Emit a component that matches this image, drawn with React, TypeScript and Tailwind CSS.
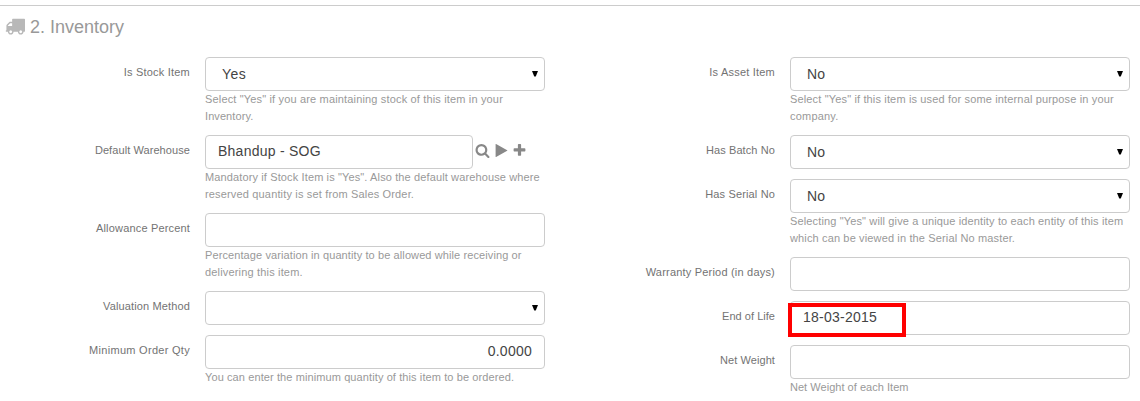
import type { ReactNode } from "react";

const TRUCK =
  "M640 1408q0-52-38-90t-90-38-90 38-38 90 38 90 90 38 90-38 38-90zm-384-512h384v-256h-158q-13 0-22 9l-195 195q-9 9-9 22v30zm1280 512q0-52-38-90t-90-38-90 38-38 90 38 90 90 38 90-38 38-90zm256-1088v1024q0 15-4 26.500t-13.500 18.500-16.500 11.500-23.500 6-22.500 2-25.500 0-22.500-.5q0 106-75 181t-181 75-181-75-75-181h-384q0 106-75 181t-181 75-181-75-75-181h-64q-3 0-22.500.5t-25.500 0-22.500-2-23.500-6-16.500-11.500-13.500-18.500-4-26.500q0-26 19-45t45-19v-320q0-8-.5-35t0-38 2.500-34.500 6.500-37 14-30.500 22.500-30l198-198q19-19 50.500-32t58.500-13h160v-192q0-26 19-45t45-19h1024q26 0 45 19t19 45z";
const SEARCH =
  "M1216 832q0-185-131.500-316.500t-316.500-131.500-316.500 131.500-131.500 316.500 131.500 316.500 316.500 131.500 316.500-131.500 131.500-316.500zm512 832q0 52-38 90t-90 38q-54 0-90-38l-343-342q-179 124-399 124-143 0-273.500-55.500t-225-150-150-225-55.500-273.500 55.500-273.500 150-225 225-150 273.500-55.500 273.500 55.500 225 150 150 225 55.500 273.500q0 220-124 399l343 343q37 37 37 90z";
const PLAY =
  "M1576 927l-1328 738q-23 13-39.500 3t-16.500-36v-1472q0-26 16.500-36t39.500 3l1328 738q23 13 23 31t-23 31z";
const PLUS =
  "M1600 736v192q0 40-28 68t-68 28h-416v416q0 40-28 68t-68 28h-192q-40 0-68-28t-28-68v-416h-416q-40 0-68-28t-28-68v-192q0-40 28-68t68-28h416v-416q0-40 28-68t68-28h192q40 0 68 28t28 68v416h416q40 0 68 28t28 68z";

type Line = [text: string, tracking: string];

function Glyph({ d, className }: { d: string; className: string }) {
  return (
    <svg viewBox="0 0 1792 1792" className={className} fill="currentColor" aria-hidden="true">
      <path d={d} />
    </svg>
  );
}

function Field({ label, help, children }: { label: Line; help?: Line[]; children: ReactNode }) {
  return (
    <div className="mb-2.5 flex">
      <div className={`w-[190px] shrink-0 pt-[7px] text-right text-[11px] leading-[17px] text-[#737373] ${label[1]}`}>
        {label[0]}
      </div>
      <div className="ml-[15px] w-[340px]">
        {children}
        {help?.map(([text, tracking]) => (
          <p key={text} className={`whitespace-nowrap text-[11px] leading-[17px] text-[#999] ${tracking}`}>
            {text}
          </p>
        ))}
      </div>
    </div>
  );
}

function Select({ value = "", tracking = "" }: { value?: string; tracking?: string }) {
  return (
    <div className="flex h-[34px] items-start justify-between rounded-[4px] border border-[#ccc] pl-4 pr-1.5 pt-1.5 text-[14px] leading-5 text-[#444]">
      <span className={tracking}>{value}</span>
      <svg viewBox="0 0 12 11" className="mt-[7px] h-[5.5px] w-1.5" fill="#000" aria-hidden="true">
        <path d="M0 0h12L7.500 11h-3z" />
      </svg>
    </div>
  );
}

function Input({ value = "", className = "w-full" }: { value?: string; className?: string }) {
  return (
    <div
      className={`h-[34px] rounded-[4px] border border-[#ccc] px-3 pt-[5px] text-[14px] leading-5 tracking-[0.25px] text-[#444] ${className}`}
    >
      {value}
    </div>
  );
}

export default function App() {
  return (
    <main className="h-[401px] overflow-hidden bg-white pt-[5px] font-['Liberation_Sans',Arial,sans-serif]">
      <section className="border-t border-[#ccc]">
        <h2 className="flex h-[51px] items-start pl-[5px] pt-[10px] text-[18px] leading-5 text-[#999]">
          <Glyph d={TRUCK} className="h-5 w-5 text-[#b8b8b8]" />
          <span className="ml-[5px] mt-px">2. Inventory</span>
        </h2>
        <div className="flex gap-10">
          <div className="w-[545px]">
            <Field
              label={["Is Stock Item", "tracking-[0.21px]"]}
              help={[
                ['Select "Yes" if you are maintaining stock of this item in your', "tracking-[0.16px]"],
                ["Inventory.", "tracking-[0.08px]"],
              ]}
            >
              <Select value="Yes" tracking="tracking-[0.5px]" />
            </Field>
            <Field
              label={["Default Warehouse", "tracking-[0.08px]"]}
              help={[
                ['Mandatory if Stock Item is "Yes". Also the default warehouse where', "tracking-[0.125px]"],
                ["reserved quantity is set from Sales Order.", "tracking-[0.16px]"],
              ]}
            >
              <div className="flex">
                <Input value="Bhandup - SOG" className="w-[268px]" />
                <div className="flex pl-0.5 pt-2 text-[#888]">
                  <Glyph d={SEARCH} className="h-[15px] w-[15px]" />
                  <Glyph d={PLAY} className="ml-1 h-[15px] w-[15px]" />
                  <Glyph d={PLUS} className="ml-[3px] h-[15px] w-[15px]" />
                </div>
              </div>
            </Field>
            <Field
              label={["Allowance Percent", "tracking-[0.17px]"]}
              help={[
                ["Percentage variation in quantity to be allowed while receiving or", "tracking-[0.1px]"],
                ["delivering this item.", "tracking-[0.17px]"],
              ]}
            >
              <Input />
            </Field>
            <Field label={["Valuation Method", "tracking-[0.13px]"]}>
              <Select />
            </Field>
            <Field
              label={["Minimum Order Qty", "tracking-[0.29px]"]}
              help={[["You can enter the minimum quantity of this item to be ordered.", "tracking-[0.1px]"]]}
            >
              <Input value="0.0000" className="w-full text-right" />
            </Field>
          </div>
          <div className="w-[545px]">
            <Field
              label={["Is Asset Item", "tracking-[0.21px]"]}
              help={[
                ['Select "Yes" if this item is used for some internal purpose in your', "tracking-[0.15px]"],
                ["company.", "tracking-[0.2px]"],
              ]}
            >
              <Select value="No" tracking="tracking-[0.25px]" />
            </Field>
            <Field label={["Has Batch No", "tracking-[0.1px]"]}>
              <Select value="No" tracking="tracking-[0.25px]" />
            </Field>
            <Field
              label={["Has Serial No", "tracking-[0.15px]"]}
              help={[
                ['Selecting "Yes" will give a unique identity to each entity of this item', "tracking-[0.137px]"],
                ["which can be viewed in the Serial No master.", "tracking-[0.14px]"],
              ]}
            >
              <Select value="No" tracking="tracking-[0.25px]" />
            </Field>
            <Field label={["Warranty Period (in days)", "tracking-[0.2px]"]}>
              <Input />
            </Field>
            <Field label={["End of Life", "tracking-[0.03px]"]}>
              <div className="relative">
                <Input value="18-03-2015" />
                <div className="absolute -left-0.5 top-0.5 h-[34px] w-[118px] border-4 border-[#f00]" />
              </div>
            </Field>
            <Field
              label={["Net Weight", "tracking-[0.08px]"]}
              help={[["Net Weight of each Item", "tracking-[0.03px]"]]}
            >
              <Input />
            </Field>
          </div>
        </div>
      </section>
    </main>
  );
}
